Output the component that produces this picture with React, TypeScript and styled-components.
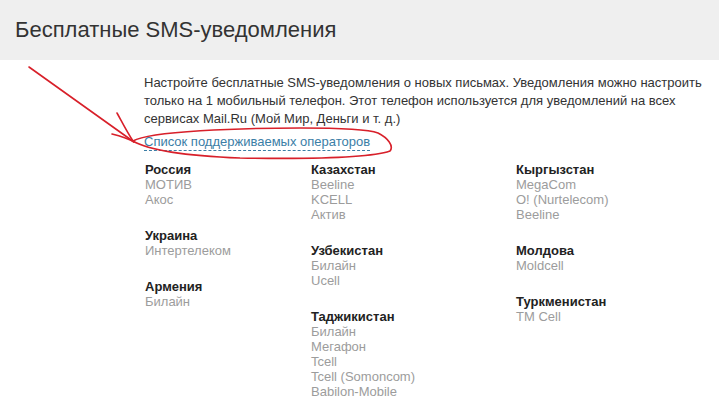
import React from "react";
import styled, { createGlobalStyle } from "styled-components";

const GlobalStyle = createGlobalStyle`
  html, body {
    margin: 0;
    padding: 0;
    background: #fff;
    font-family: "Liberation Sans", Arial, sans-serif;
  }
`;

const Page = styled.div`
  position: relative;
  width: 719px;
  height: 411px;
  overflow: hidden;
`;

const Header = styled.div`
  height: 60px;
  background: #efefef;
  display: flex;
  align-items: center;
  padding: 0 15px;
  h1 {
    margin: 0;
    font-size: 22px;
    font-weight: normal;
    color: #333;
  }
`;

const Content = styled.div`
  padding: 14px 0 0 144px;
`;

const Intro = styled.p`
  margin: 0;
  font-size: 13px;
  line-height: 18px;
  color: #333;
  width: 570px;
`;

const OperatorsLink = styled.a`
  display: inline-block;
  margin-top: 6px;
  font-size: 13px;
  line-height: 16px;
  color: #3b7ea6;
  text-decoration: none;
  border-bottom: 1px dashed #3b7ea6;
`;

const Columns = styled.div`
  display: grid;
  grid-template-columns: 166px 205px 1fr;
  margin-top: 11px;
  padding-left: 1px;
`;

const Column = styled.div`
  display: flex;
  flex-direction: column;
  gap: 21px;
`;

const Group = styled.div`
  display: flex;
  flex-direction: column;
  font-size: 13px;
  line-height: 15px;
`;

const Country = styled.div`
  font-weight: bold;
  color: #222;
`;

const Operator = styled.div`
  color: #9c9c9c;
`;

const Scribble = styled.svg`
  position: absolute;
  left: 0;
  top: 0;
  pointer-events: none;
`;

type Entry = { country: string; operators: string[] };

const columns: Entry[][] = [
  [
    { country: "Россия", operators: ["МОТИВ", "Акос"] },
    { country: "Украина", operators: ["Интертелеком"] },
    { country: "Армения", operators: ["Билайн"] },
  ],
  [
    { country: "Казахстан", operators: ["Beeline", "KCELL", "Актив"] },
    { country: "Узбекистан", operators: ["Билайн", "Ucell"] },
    {
      country: "Таджикистан",
      operators: ["Билайн", "Мегафон", "Tcell", "Tcell (Somoncom)", "Babilon-Mobile"],
    },
  ],
  [
    { country: "Кыргызстан", operators: ["MegaCom", "O! (Nurtelecom)", "Beeline"] },
    { country: "Молдова", operators: ["Moldcell"] },
    { country: "Туркменистан", operators: ["TM Cell"] },
  ],
];

export default function App() {
  return (
    <Page>
      <GlobalStyle />
      <Header>
        <h1>Бесплатные SMS-уведомления</h1>
      </Header>
      <Content>
        <Intro>
          Настройте бесплатные SMS-уведомления о новых письмах. Уведомления можно настроить
          только на 1 мобильный телефон. Этот телефон используется для уведомлений на всех
          сервисах Mail.Ru (Мой Мир, Деньги и т. д.)
        </Intro>
        <OperatorsLink href="#">Список поддерживаемых операторов</OperatorsLink>
        <Columns>
          {columns.map((col, i) => (
            <Column key={i}>
              {col.map((g) => (
                <Group key={g.country}>
                  <Country>{g.country}</Country>
                  {g.operators.map((o) => (
                    <Operator key={o}>{o}</Operator>
                  ))}
                </Group>
              ))}
            </Column>
          ))}
        </Columns>
      </Content>
      <Scribble width="719" height="411" viewBox="0 0 719 411">
        <g fill="none" stroke="#d8202a" strokeWidth="1.6" strokeLinecap="round">
          <path d="M29,67 L134,142" />
          <path d="M117,113 C122,122 127,132 133,141" />
          <path d="M112,134 C120,136 127,138 134,142" />
          <path d="M133,141 C150,131 240,128 300,128 C340,128 370,130 378,133 C388,138 394,146 390,151 C370,158 300,159 240,158 C190,156 150,151 133,141" />
        </g>
      </Scribble>
    </Page>
  );
}
